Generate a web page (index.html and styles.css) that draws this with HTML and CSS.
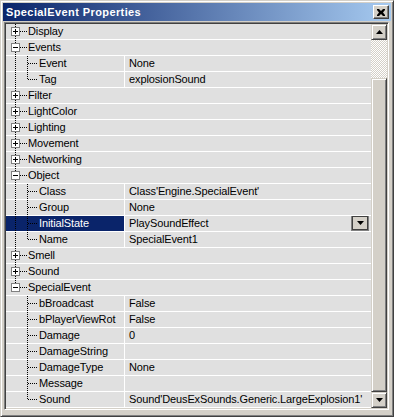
FILE: index.html
```html
<!DOCTYPE html>
<html>
<head>
<meta charset="utf-8">
<link rel="stylesheet" href="styles.css">
</head>
<body>
<svg class="defs" width="0" height="0">
  <defs>
    <g id="vmain"><line x1="9.5" y1="0" x2="9.5" y2="16" class="dot"/></g>
    <g id="boxplus">
      <rect x="5.5" y="3.5" width="8" height="8" class="box"/>
      <line x1="7" y1="7.5" x2="12" y2="7.5" class="sign"/>
      <line x1="9.5" y1="5" x2="9.5" y2="10" class="sign"/>
      <line x1="14" y1="7.5" x2="21" y2="7.5" class="dot"/>
    </g>
    <g id="boxminus">
      <rect x="5.5" y="3.5" width="8" height="8" class="box"/>
      <line x1="7" y1="7.5" x2="12" y2="7.5" class="sign"/>
      <line x1="14" y1="7.5" x2="21" y2="7.5" class="dot"/>
    </g>
    <g id="cmid"><line x1="21.5" y1="0" x2="21.5" y2="16" class="dot"/><line x1="22" y1="7.5" x2="32" y2="7.5" class="dot"/></g>
    <g id="clast"><line x1="21.5" y1="0" x2="21.5" y2="8" class="dot"/><line x1="22" y1="7.5" x2="32" y2="7.5" class="dot"/></g>
  </defs>
</svg>
<div class="window">
  <div class="titlebar">
    <span class="title">SpecialEvent Properties</span>
    <span class="close"><svg width="8" height="7" viewBox="0 0 8 7"><path d="M0 0h2l2 2 2-2h2v1l-2 2.5 2 2.5v1h-2l-2-2-2 2h-2v-1l2-2.5-2-2.5z" fill="#000"/></svg></span>
  </div>
  <div class="client">
    <div class="list">
      <div class="row cat"><svg class="g cg" width="22" height="15"><use href="#vmain"/><use href="#boxplus"/></svg><span>Display</span></div>
      <div class="row cat"><svg class="g cg" width="22" height="15"><use href="#vmain"/><use href="#boxminus"/></svg><span>Events</span></div>
      <div class="row"><div class="name"><svg class="g kg" width="33" height="15"><use href="#vmain"/><use href="#cmid"/></svg><span>Event</span></div><div class="value">None</div></div>
      <div class="row"><div class="name"><svg class="g kg" width="33" height="15"><use href="#vmain"/><use href="#clast"/></svg><span>Tag</span></div><div class="value">explosionSound</div></div>
      <div class="row cat"><svg class="g cg" width="22" height="15"><use href="#vmain"/><use href="#boxplus"/></svg><span>Filter</span></div>
      <div class="row cat"><svg class="g cg" width="22" height="15"><use href="#vmain"/><use href="#boxplus"/></svg><span>LightColor</span></div>
      <div class="row cat"><svg class="g cg" width="22" height="15"><use href="#vmain"/><use href="#boxplus"/></svg><span>Lighting</span></div>
      <div class="row cat"><svg class="g cg" width="22" height="15"><use href="#vmain"/><use href="#boxplus"/></svg><span>Movement</span></div>
      <div class="row cat"><svg class="g cg" width="22" height="15"><use href="#vmain"/><use href="#boxplus"/></svg><span>Networking</span></div>
      <div class="row cat"><svg class="g cg" width="22" height="15"><use href="#vmain"/><use href="#boxminus"/></svg><span>Object</span></div>
      <div class="row"><div class="name"><svg class="g kg" width="33" height="15"><use href="#vmain"/><use href="#cmid"/></svg><span>Class</span></div><div class="value">Class'Engine.SpecialEvent'</div></div>
      <div class="row"><div class="name"><svg class="g kg" width="33" height="15"><use href="#vmain"/><use href="#cmid"/></svg><span>Group</span></div><div class="value">None</div></div>
      <div class="row sel"><div class="name"><svg class="g kg" width="33" height="15"><use href="#vmain"/><use href="#cmid"/></svg><span>InitialState</span></div><div class="value"><span class="vtext">PlaySoundEffect</span><span class="combo"><svg width="7" height="4" viewBox="0 0 7 4"><path d="M0 0h7l-3.5 4z" fill="#000"/></svg></span></div></div>
      <div class="row"><div class="name"><svg class="g kg" width="33" height="15"><use href="#vmain"/><use href="#clast"/></svg><span>Name</span></div><div class="value">SpecialEvent1</div></div>
      <div class="row cat"><svg class="g cg" width="22" height="15"><use href="#vmain"/><use href="#boxplus"/></svg><span>Smell</span></div>
      <div class="row cat"><svg class="g cg" width="22" height="15"><use href="#vmain"/><use href="#boxplus"/></svg><span>Sound</span></div>
      <div class="row cat"><svg class="g cg" width="22" height="15"><line x1="9.5" y1="0" x2="9.5" y2="4" class="dot"/><use href="#boxminus"/></svg><span>SpecialEvent</span></div>
      <div class="row"><div class="name"><svg class="g kg" width="33" height="15"><use href="#cmid"/></svg><span>bBroadcast</span></div><div class="value">False</div></div>
      <div class="row"><div class="name"><svg class="g kg" width="33" height="15"><use href="#cmid"/></svg><span>bPlayerViewRot</span></div><div class="value">False</div></div>
      <div class="row"><div class="name"><svg class="g kg" width="33" height="15"><use href="#cmid"/></svg><span>Damage</span></div><div class="value">0</div></div>
      <div class="row"><div class="name"><svg class="g kg" width="33" height="15"><use href="#cmid"/></svg><span>DamageString</span></div><div class="value"></div></div>
      <div class="row"><div class="name"><svg class="g kg" width="33" height="15"><use href="#cmid"/></svg><span>DamageType</span></div><div class="value">None</div></div>
      <div class="row"><div class="name"><svg class="g kg" width="33" height="15"><use href="#cmid"/></svg><span>Message</span></div><div class="value"></div></div>
      <div class="row"><div class="name"><svg class="g kg" width="33" height="15"><use href="#clast"/></svg><span>Sound</span></div><div class="value">Sound'DeusExSounds.Generic.LargeExplosion1'</div></div>
    </div>
    <div class="scrollbar">
      <span class="sbtn"><svg width="7" height="4" viewBox="0 0 7 4"><path d="M3.5 0l3.5 4h-7z" fill="#000"/></svg></span>
      <span class="track"></span>
      <span class="thumb"></span>
      <span class="sbtn"><svg width="7" height="4" viewBox="0 0 7 4"><path d="M0 0h7l-3.5 4z" fill="#000"/></svg></span>
    </div>
  </div>
</div>
</body>
</html>
```
FILE: styles.css
```css
html, body {
  margin: 0;
  padding: 0;
  background: #d4d0c8;
}
.defs {
  position: absolute;
  width: 0;
  height: 0;
}
.window {
  box-sizing: border-box;
  width: 394px;
  height: 417px;
  background: #d4d0c8;
  border: 1px solid;
  border-color: #d4d0c8 #404040 #404040 #d4d0c8;
  box-shadow: inset 1px 1px #fff, inset -1px -1px #808080;
  padding: 2px;
  display: flex;
  flex-direction: column;
  font-family: "Liberation Sans", Arial, sans-serif;
  font-size: 11px;
}
.titlebar {
  height: 18px;
  flex: none;
  background: linear-gradient(90deg, #0a246a, #a6caf0);
  display: flex;
  align-items: center;
  justify-content: space-between;
  padding: 0 2px 0 3px;
}
.title {
  color: #fff;
  font-weight: bold;
  font-size: 11px;
  letter-spacing: 0.4px;
}
.close {
  width: 14px;
  height: 12px;
  background: #d4d0c8;
  border: 1px solid;
  border-color: #fff #404040 #404040 #fff;
  box-shadow: inset -1px -1px #808080;
  display: flex;
  align-items: center;
  justify-content: center;
}
.client {
  margin: 1px 2px 0 1px;
  display: flex;
  border: 1px solid;
  border-color: #808080 #fff #fff #808080;
  box-shadow: inset 1px 1px #404040, inset -1px -1px #d4d0c8;
  padding: 1px;
  width: 381px;
}
.list {
  width: 365px;
  background: #e0e0e0;
  display: flex;
  flex-direction: column;
  letter-spacing: -0.12px;
}
.row {
  display: flex;
  height: 15px;
  border-bottom: 1px solid #fff;
  line-height: 15px;
  color: #000;
  white-space: nowrap;
}
.g {
  flex: none;
  display: block;
  overflow: visible;
}
.dot {
  stroke: #000;
  stroke-width: 1;
  stroke-dasharray: 1 1;
  shape-rendering: crispEdges;
  fill: none;
}
.box {
  fill: #fff;
  stroke: #808080;
  stroke-width: 1;
  shape-rendering: crispEdges;
}
.sign {
  stroke: #000;
  stroke-width: 1;
  shape-rendering: crispEdges;
}
.name {
  width: 118px;
  flex: none;
  display: flex;
  border-right: 1px solid #fff;
  overflow: hidden;
}
.value {
  flex: 1;
  padding-left: 4px;
  display: flex;
  justify-content: space-between;
  align-items: center;
  overflow: hidden;
}
.sel .name {
  background: #0a246a;
  color: #fff;
}
.sel .name .dot {
  stroke: #fff;
}
.combo {
  box-sizing: border-box;
  width: 18px;
  height: 16px;
  margin: -1px 2px 0 0;
  background: #d4d0c8;
  border: 1px solid #808080;
  box-shadow: inset 1px 1px #404040, inset -1px -1px #404040;
  display: flex;
  align-items: center;
  justify-content: center;
}
.scrollbar {
  width: 16px;
  display: flex;
  flex-direction: column;
}
.sbtn, .thumb {
  box-sizing: border-box;
  background: #d4d0c8;
  border: 1px solid;
  border-color: #d4d0c8 #404040 #404040 #d4d0c8;
  box-shadow: inset 1px 1px #fff, inset -1px -1px #808080;
}
.sbtn {
  height: 16px;
  display: flex;
  align-items: center;
  justify-content: center;
}
.track {
  height: 38px;
  background-image: conic-gradient(#fff 25%, #d4d0c8 0 50%, #fff 0 75%, #d4d0c8 0);
  background-size: 2px 2px;
}
.thumb {
  flex: 1;
}
```
